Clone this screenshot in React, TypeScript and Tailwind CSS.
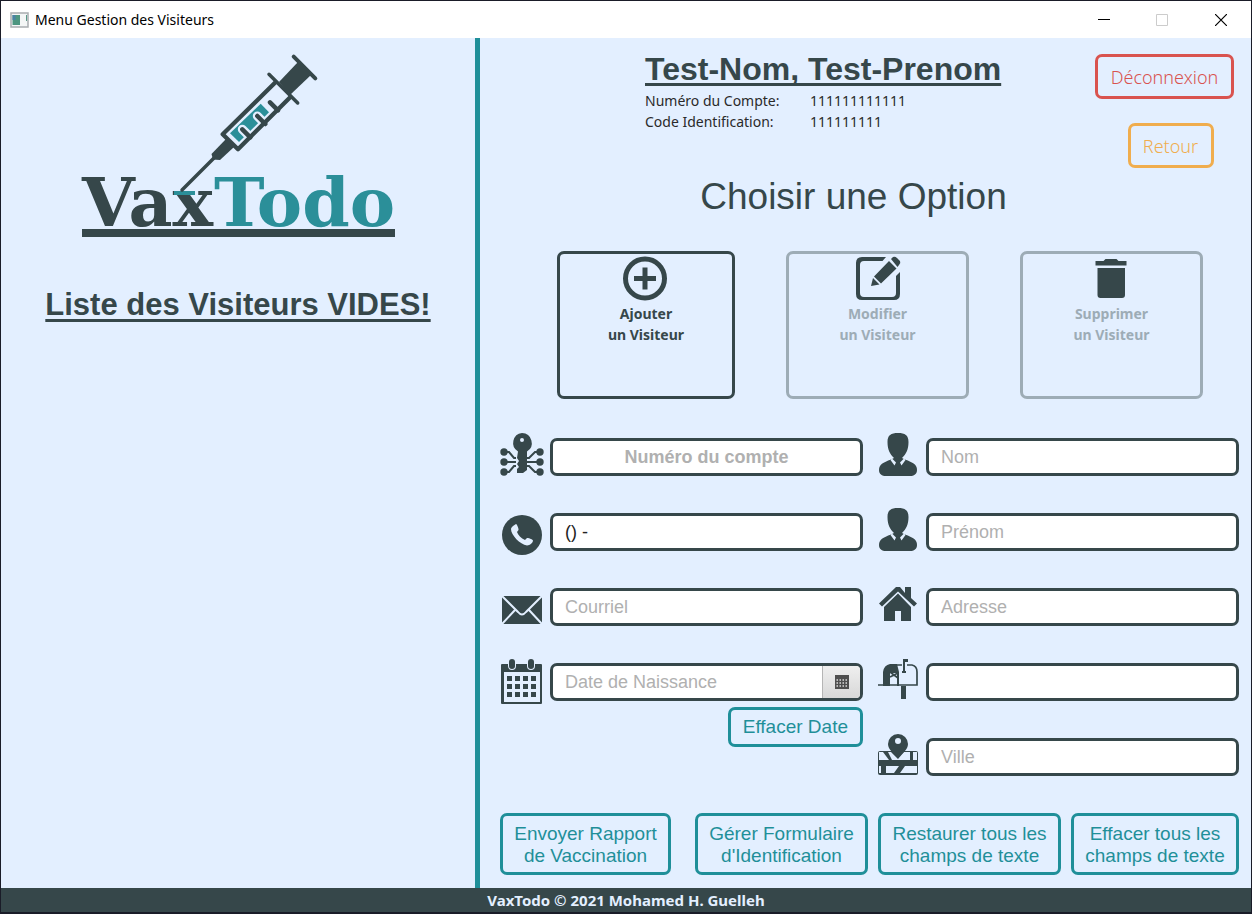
import React, { useId, useState } from "react";

const sans = "font-['Liberation_Sans',Arial,sans-serif]";
const ui = "font-['Noto_Sans','Segoe_UI',sans-serif]";

function Logo() {
  return (
    <svg viewBox="0 0 312 186" className="h-[186px] w-[312px] shrink-0 overflow-visible" role="img" aria-label="VaxTodo">
      <g fontFamily="DejaVu Serif" fontWeight="700" fontSize="68">
        <text x="0" y="174" fill="#36474a">Vax</text>
        <text x="132" y="174" fill="#2b8f99">Todo</text>
      </g>
      <rect x="92" y="139" width="21" height="4" fill="#2b8f99" />
      <rect x="0" y="177" width="313" height="8" fill="#36474a" />
      <path d="m148 81.300 30.700-29.600 8.300 8.600L157 90z" fill="#2b8f99" />
      <path d="m160.300 77.300 8 8M175.300 64l8 8M188 50.300l8 8" stroke="#e3efff" strokeWidth="9" strokeLinecap="round" />
      <path d="m160.300 77.300 8 8M175.300 64l8 8M188 50.300l8 8" stroke="#36474a" strokeWidth="4.500" strokeLinecap="round" />
      <g stroke="#36474a" strokeLinecap="round" fill="none">
        <path d="m100 138 33-33" strokeWidth="3.500" />
        <path d="m211.700 4.700 21.600 21.600" strokeWidth="4" />
        <path d="m187 22.300 28.700 28.700" strokeWidth="3.500" />
        <path d="m194 29.700-53.300 52.600 15.300 15 52.700-52.600" strokeWidth="4.300" strokeLinecap="butt" strokeLinejoin="round" />
      </g>
      <path d="M216 10 229 23 208 43l-11-13z" fill="#36474a" />
      <path d="m144 87 8 8-14 13-7-.5-1.500-5.500z" fill="#36474a" />
    </svg>
  );
}

const box = "h-11 w-11 shrink-0 overflow-visible";

function KeyIcon() {
  return (
    <svg viewBox="0 -1 44 44" className={box} fill="#36474a" aria-hidden="true">
      <path fillRule="evenodd" d="M22 0a10 10 0 0 1 5 18.500V37l-4 3h-6v-4l2-2-2-3 2-3-2-3 1-6.500A10 10 0 0 1 22 0Zm0 5a2 2 0 1 0 0 4 2 2 0 0 0 0-4Z" />
      <g fill="none" stroke="#36474a" strokeWidth="2">
        <path d="M4 19h5l5 6h2M4 29h12M4 39h5l5-6h2M40 19h-5l-6 6h-3M40 29H26M40 39h-5l-6-6h-3" />
      </g>
      <circle cx="4" cy="19" r="3.700" /><circle cx="4" cy="29" r="3.700" /><circle cx="4" cy="39" r="3.700" />
      <circle cx="40" cy="19" r="3.700" /><circle cx="40" cy="29" r="3.700" /><circle cx="40" cy="39" r="3.700" />
    </svg>
  );
}

function PhoneIcon() {
  return (
    <svg viewBox="0 -6 44 44" className={box} aria-hidden="true">
      <circle cx="22" cy="22" r="20" fill="#36474a" />
      <path d="m13 13 3-2c1 0 3 5 2.500 6l-1.500 2c1 3 4 6.500 8 8l2-2c1-.5 6 1.500 6 2.500 0 2-3 5-6 5C20 31.500 11 22 11 16c0-1 1-2 2-3Z" fill="#e3efff" />
    </svg>
  );
}

function MailIcon() {
  return (
    <svg viewBox="0 -6 44 44" className={box} aria-hidden="true">
      <path d="M2 8h40v28H2z" fill="#36474a" />
      <path d="m2 8 16 16q4 5 8 0L42 8M2 36l13-14M42 36 29 22" fill="none" stroke="#e3efff" strokeWidth="2" />
    </svg>
  );
}

const dots = [[7, 18], [15, 18], [23, 18], [31, 18], [7, 26], [15, 26], [23, 26], [31, 26], [7, 34], [15, 34], [23, 34], [31, 34]];

function CalendarIcon() {
  return (
    <svg viewBox="0 -3 44 46" className="h-[46px] w-11 shrink-0 overflow-visible" fill="#36474a" aria-hidden="true">
      <path fillRule="evenodd" d="M2 6h39a1 1 0 0 1 1 1v38a1 1 0 0 1-1 1H2a1 1 0 0 1-1-1V7a1 1 0 0 1 1-1Zm2 8v30h36V14Z" />
      <rect x="8" y="0" width="8" height="12" rx="4" fill="#e3efff" />
      <rect x="27" y="0" width="8" height="12" rx="4" fill="#e3efff" />
      <rect x="9" y="1" width="6" height="10" rx="3" />
      <rect x="28" y="1" width="6" height="10" rx="3" />
      {dots.map(([x, y]) => <rect key={`${x}-${y}`} x={x} y={y} width="5" height="5" />)}
    </svg>
  );
}

function PersonIcon() {
  return (
    <svg viewBox="0 0 44 44" className={box} fill="#36474a" aria-hidden="true">
      <path d="M22 1c7 0 10.500 2 10.500 9 0 8-2.500 12-6.500 16l3 1.500c8 3 12 5 12 10.500 0 4-3 6-7 6H10c-4 0-7-2-7-6 0-5.500 4-7.500 12-10.500l3-1.500c-4-4-6.500-8-6.500-16 0-7 3.500-9 10.500-9Z" />
      <path d="m16 26.500 4 4-1.500 3-4-5.500Zm12 0-4 4 1.500 3 4-5.500Z" fill="#e3efff" />
    </svg>
  );
}

function HouseIcon() {
  return (
    <svg viewBox="0 0 44 44" className={box} fill="#36474a" aria-hidden="true">
      <path d="M20 5 3 21.500 6 24.500 22 9.500 38 24.500 41 21.500 35 16V5h-6v6l-5-6Z" />
      <path d="M22 11.500 8 25v14h11V29h6v10h10V25Z" />
    </svg>
  );
}

function MailboxIcon() {
  return (
    <svg viewBox="0 0 44 44" className={box} aria-hidden="true">
      <path d="M7 29V15q1-7 7-8h7l2 8v14h-2V16h-7v13Z" fill="#36474a" />
      <path d="M14 8h12M31 8h5q5 1 5 7v13H2M14 15l8 6M14 20l8-4" fill="none" stroke="#36474a" strokeWidth="1.700" />
      <path d="M27 2h5v3h-3v9h1v2h-4v-2h1zM25 29h5v13h-5z" fill="#36474a" />
    </svg>
  );
}

function MapIcon() {
  return (
    <svg viewBox="0 0 44 44" className={box} aria-hidden="true">
      <rect x="2" y="19" width="40" height="24" rx="2" fill="#36474a" />
      <path d="M3 20h4l6 8H3zM12 20h3l7 7 6-7h6v8H16zM37 20h4v8h-4zM3 34h2v7H3zM10 34h13l-5 7h-8zM29 34h12v7H24z" fill="#e3efff" />
      <path fillRule="evenodd" d="M22 2a10 10 0 0 1 10 10c0 6-6 9-10 14-4-5-10-8-10-14A10 10 0 0 1 22 2Zm0 4a3 3 0 1 0 0 6 3 3 0 0 0 0-6Z" fill="#36474a" />
    </svg>
  );
}

function AddIcon() {
  return (
    <svg viewBox="0 0 46 46" className="h-[46px] w-[46px]" fill="none" stroke="#36474a" aria-hidden="true">
      <circle cx="22" cy="22.500" r="19.500" strokeWidth="5" />
      <path d="M22 11.500v22M11 22.500h22" strokeWidth="5" />
    </svg>
  );
}

function EditIcon() {
  return (
    <svg viewBox="0 0 46 46" className="h-[46px] w-[46px]" aria-hidden="true">
      <path d="M31 1 27.500 5H9q-4 0-4 4v28q0 4 4 4h28q4 0 4-4V20l4-4v22q0 6-6 6H7q-6 0-6-6V7q0-6 6-6Z" fill="#36474a" />
      <path d="m34 5 7.500 7.500L26 27.500 19 20.500ZM36 3l2-2q2-1 4 1l3 3q1 2-1 4l-1.500 2ZM18 22l6.500 6.500L16 30Z" fill="#36474a" />
    </svg>
  );
}

function TrashIcon() {
  return (
    <svg viewBox="0 0 46 46" className="h-[46px] w-[46px]" fill="#36474a" aria-hidden="true">
      <path d="M6.500 5h8l2-2h11l2 2h8v4.500h-31ZM8.500 12H36v27q0 3-3 3H11.500q-3 0-3-3Z" />
    </svg>
  );
}

function Action({ icon, first, disabled, className }: { icon: React.ReactNode; first: string; disabled?: boolean; className: string }) {
  return (
    <button
      disabled={disabled}
      className={`${ui} flex h-[148px] flex-col items-center rounded-[7px] border-[3px] pt-[2px] text-sm leading-[21px] font-bold ${disabled ? "border-[#9dacb6] text-[#9dacb6]" : "border-[#36474a] text-[#36474a]"} ${className}`}
    >
      {icon}
      <span className="mt-px">{first}</span>
      <span>un Visiteur</span>
    </button>
  );
}

const fieldClass = `${sans} h-[38px] w-full min-w-0 rounded-[7px] border-[3px] border-[#36474a] bg-white px-3 text-lg text-[#222222] outline-none placeholder:text-[#b0b0b0]`;

function Field({ icon, label, placeholder, value = "", strong }: { icon: React.ReactNode; label: string; placeholder?: string; value?: string; strong?: boolean }) {
  const id = useId();
  const [text, setText] = useState(value);
  return (
    <div className="flex h-[45px] items-end gap-[6px]">
      <label htmlFor={id} aria-label={label}>{icon}</label>
      <input id={id} value={text} onChange={(e) => setText(e.target.value)} placeholder={placeholder} className={`${fieldClass} ${strong ? "text-center font-bold" : ""}`} />
    </div>
  );
}

function DateField() {
  const id = useId();
  const [text, setText] = useState("");
  return (
    <div>
      <div className="flex h-[45px] items-end gap-[6px]">
        <label htmlFor={id} aria-label="Date de Naissance"><CalendarIcon /></label>
        <div className="flex h-[38px] min-w-0 flex-1 overflow-hidden rounded-[7px] border-[3px] border-[#36474a] bg-white">
          <input id={id} value={text} onChange={(e) => setText(e.target.value)} placeholder="Date de Naissance" className={`${sans} min-w-0 flex-1 px-3 text-lg outline-none placeholder:text-[#b0b0b0]`} />
          <button aria-label="Ouvrir le calendrier" className="flex w-[38px] items-center justify-center border-l border-[#b5b5b5] bg-linear-to-b from-[#efefef] to-[#d8d8d8]">
            <svg viewBox="0 0 14 14" className="h-[14px] w-[14px]" aria-hidden="true">
              <path d="M0 0h14v14H0z" fill="#4f4f4f" />
              <path d="M1.500 5h12M1.500 8h12M1.500 11h12" stroke="#dddddd" strokeWidth="1.500" strokeDasharray="1.500 1.500" />
            </svg>
          </button>
        </div>
      </div>
      <div className="mt-[6px] flex justify-end">
        <button onClick={() => setText("")} className={`${sans} h-10 rounded-[7px] border-[3px] border-[#1f8f99] px-3 text-[19px] text-[#1f8f99]`}>Effacer Date</button>
      </div>
    </div>
  );
}

function FootButton({ lines, className }: { lines: [string, string]; className: string }) {
  return (
    <button className={`${sans} flex h-[62px] flex-col items-center justify-center rounded-[7px] border-[3px] border-[#1f8f99] pt-[2px] text-[19px] leading-[22px] whitespace-nowrap text-[#1f8f99] ${className}`}>
      <span>{lines[0]}</span>
      <span>{lines[1]}</span>
    </button>
  );
}

export default function App() {
  return (
    <div className="flex min-h-screen flex-col border border-b-2 border-[#1a1c28] bg-[#e3efff]">
      <header className={`${ui} flex h-[37px] shrink-0 items-center bg-white pl-[9px] text-sm text-black`}>
        <svg viewBox="0 0 19 16" className="mr-[6px] h-4 w-[19px]" aria-hidden="true">
          <rect x="1" y="1" width="17" height="14" fill="#f4f6f6" stroke="#a9adb0" strokeWidth="1.500" />
          <rect x="2.500" y="3" width="7.500" height="10" fill="#4d9680" />
          <rect x="2.500" y="3" width="3" height="5" fill="#4a82a5" />
          <rect x="16" y="3" width="1" height="6" fill="#5a9a88" />
        </svg>
        <span className="flex-1">Menu Gestion des Visiteurs</span>
        <button aria-label="Réduire" className="flex h-full w-[58px] items-center justify-center"><svg viewBox="0 0 12 12" className="h-3 w-3" aria-hidden="true"><path d="M0 5.500h12" stroke="#000" /></svg></button>
        <button aria-label="Agrandir" disabled className="flex h-full w-[58px] items-center justify-center"><svg viewBox="0 0 12 12" className="h-3 w-3" aria-hidden="true"><path d="M.5.5h11v11H.5z" fill="none" stroke="#ccc" /></svg></button>
        <button aria-label="Fermer" className="flex h-full w-[60px] items-center justify-center"><svg viewBox="0 0 12 12" className="h-3 w-3" aria-hidden="true"><path d="m0 0 12 12M12 0 0 12" stroke="#000" strokeWidth="1.200" /></svg></button>
      </header>

      <div className="flex flex-1">
        <aside className="flex w-[479px] shrink-0 flex-col items-center border-r-[5px] border-[#1f8f99] pt-[14px]">
          <Logo />
          <h2 className={`${sans} mt-[47px] text-[31px] leading-10 font-bold text-[#36474a] underline decoration-[3px] underline-offset-4 [text-decoration-skip-ink:none]`}>Liste des Visiteurs VIDES!</h2>
        </aside>

        <main className="flex min-w-0 flex-1 flex-col pr-3 pl-5">
          <div className="flex justify-between">
            <div className="ml-[145px] pt-[11px]">
              <h1 className={`${sans} text-[32px] leading-10 font-bold text-[#36474a] underline decoration-[3px] underline-offset-[3px] [text-decoration-skip-ink:none]`}>Test-Nom, Test-Prenom</h1>
              <dl className={`${ui} mt-px grid grid-cols-[165px_auto] text-sm leading-[21px] text-[#2a2a2a]`}>
                <dt>Numéro du Compte:</dt><dd>111111111111</dd>
                <dt>Code Identification:</dt><dd>111111111</dd>
              </dl>
            </div>
            <div className={`${ui} flex flex-col items-center gap-6 pt-4 pr-[5px] text-lg font-light`}>
              <button className="h-[45px] w-[139px] rounded-[7px] border-[3px] border-[#d9534f] text-[#d9534f]">Déconnexion</button>
              <button className="ml-3 h-[45px] w-[86px] rounded-[7px] border-[3px] border-[#f0ad4e] text-[#f0ad4e]">Retour</button>
            </div>
          </div>
          <h2 className={`${sans} mt-1 pr-8 text-center text-[37px] leading-[50px] text-[#36474a]`}>Choisir une Option</h2>

          <div className="mt-[29px] flex justify-between pr-9 pl-[57px]">
            <Action icon={<AddIcon />} first="Ajouter" className="w-[178px]" />
            <Action icon={<EditIcon />} first="Modifier" disabled className="w-[183px]" />
            <Action icon={<TrashIcon />} first="Supprimer" disabled className="w-[183px]" />
          </div>

          <form className="mt-8 grid grid-cols-2 gap-x-[13px]" onSubmit={(e) => e.preventDefault()}>
            <div className="flex flex-col gap-[30px]">
              <Field icon={<KeyIcon />} label="Numéro du compte" placeholder="Numéro du compte" strong />
              <Field icon={<PhoneIcon />} label="Téléphone" value="() -" />
              <Field icon={<MailIcon />} label="Courriel" placeholder="Courriel" />
              <DateField />
            </div>
            <div className="flex flex-col gap-[30px]">
              <Field icon={<PersonIcon />} label="Nom" placeholder="Nom" />
              <Field icon={<PersonIcon />} label="Prénom" placeholder="Prénom" />
              <Field icon={<HouseIcon />} label="Adresse" placeholder="Adresse" />
              <Field icon={<MailboxIcon />} label="Code postal" />
              <Field icon={<MapIcon />} label="Ville" placeholder="Ville" />
            </div>
          </form>

          <div className="mt-[37px] mb-[13px] flex justify-between">
            <FootButton lines={["Envoyer Rapport", "de Vaccination"]} className="mr-[14px] w-[171px]" />
            <FootButton lines={["Gérer Formulaire", "d'Identification"]} className="w-[173px]" />
            <FootButton lines={["Restaurer tous les", "champs de texte"]} className="w-[183px]" />
            <FootButton lines={["Effacer tous les", "champs de texte"]} className="w-[168px]" />
          </div>
        </main>
      </div>

      <footer className={`${ui} flex h-6 shrink-0 items-center justify-center bg-[#36474a] text-[15px] font-bold text-[#e3efff]`}>
        VaxTodo © 2021 Mohamed H. Guelleh
      </footer>
    </div>
  );
}
